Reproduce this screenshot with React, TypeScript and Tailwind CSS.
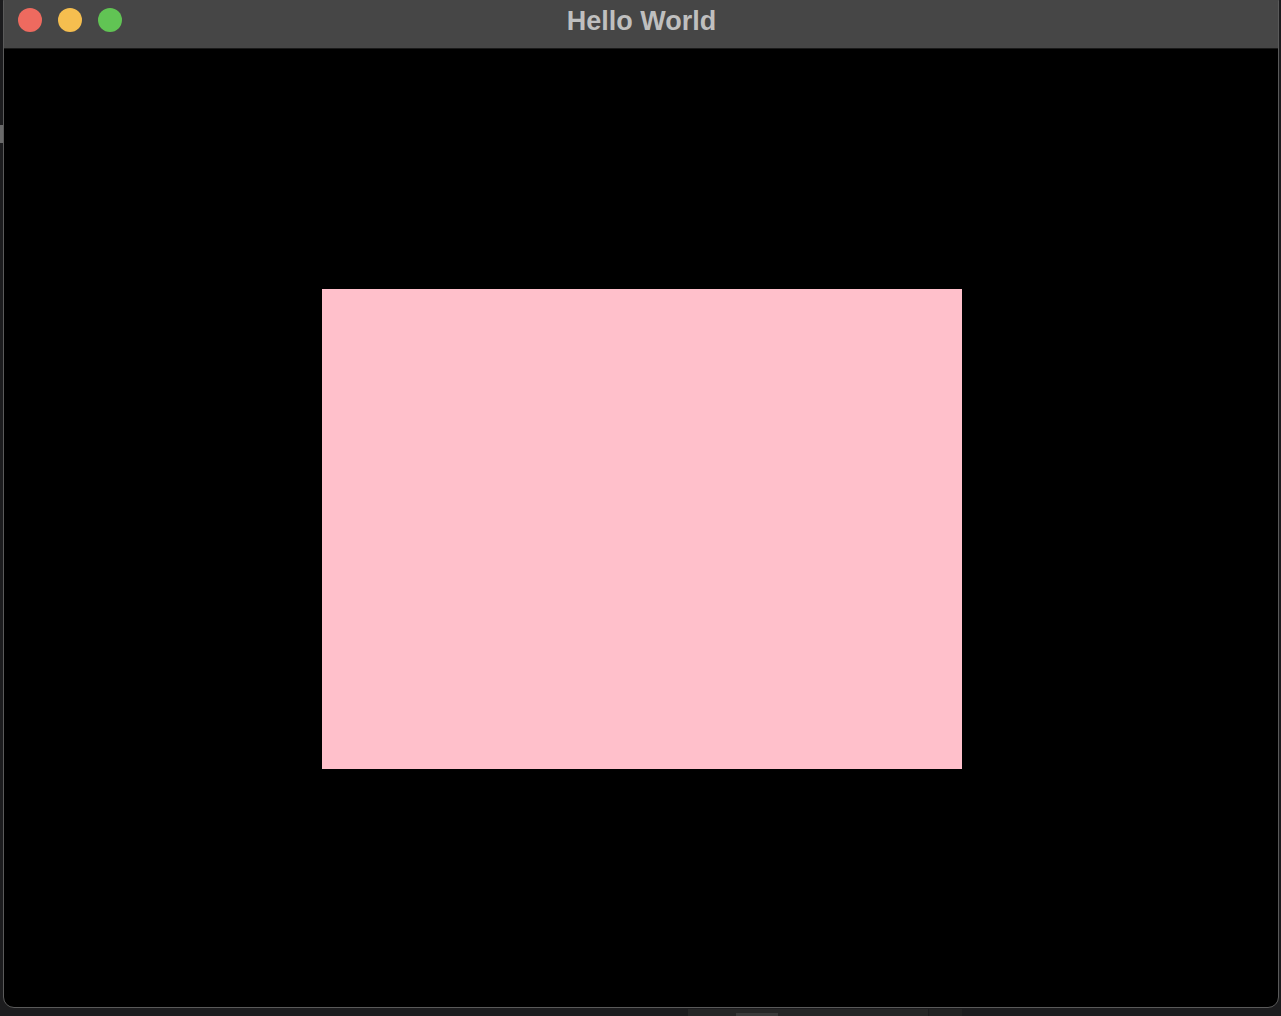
import React from "react";

export default function App() {
  return (
    <div className="w-[1281px] h-[1016px] bg-[#1c1c1e] relative overflow-hidden" style={{ fontFamily: '"Liberation Sans", Arial, sans-serif' }}>
      <div className="absolute left-0 top-[125px] w-[3px] h-[18px] bg-[#6a6a6a]" />
      <div className="absolute left-[688px] top-[1009px] w-[240px] h-[7px] bg-[#262626]" />
      <div className="absolute left-[736px] top-[1013px] w-[42px] h-[3px] bg-[#3a3a3a]" />
      <div className="absolute left-[929px] top-[1009px] w-[33px] h-[7px] bg-[#222]" />
      <div className="absolute left-[3px] top-[-10px] w-[1276px] h-[1018px] rounded-[11px] border border-[#5a5a5a] bg-black overflow-hidden flex flex-col">
        <div className="h-[58px] shrink-0 bg-[#464646] border-b border-[#1a1a1a] relative flex items-end justify-center pb-[12px]">
          <div className="absolute left-[14px] bottom-[16px] flex gap-[16px]">
            <div className="w-[24px] h-[24px] rounded-full bg-[#ee6a5f]" />
            <div className="w-[24px] h-[24px] rounded-full bg-[#f5be4f]" />
            <div className="w-[24px] h-[24px] rounded-full bg-[#61c454]" />
          </div>
          <span className="text-[27px] leading-[30px] font-bold text-[#bfbfbf] -mr-[1px]">Hello World</span>
        </div>
        <div className="flex-1 flex items-start justify-center">
          <div className="mt-[240px] ml-[2px] w-[640px] h-[480px] bg-[#ffc0cb]" />
        </div>
      </div>
    </div>
  );
}
